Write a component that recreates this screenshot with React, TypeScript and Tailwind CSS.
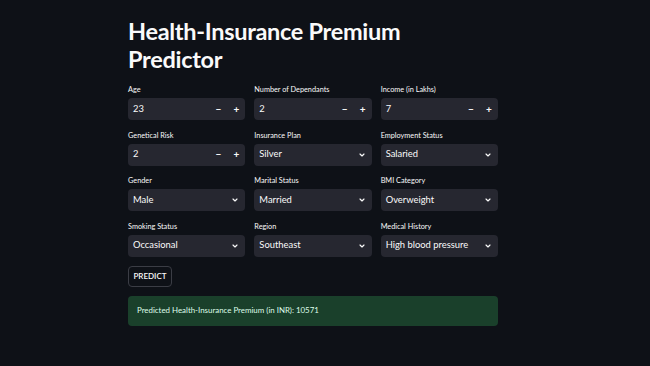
import React from "react";

type Field =
  | { kind: "number"; label: string; value: string }
  | { kind: "select"; label: string; value: string };

const fields: Field[] = [
  { kind: "number", label: "Age", value: "23" },
  { kind: "number", label: "Number of Dependants", value: "2" },
  { kind: "number", label: "Income (in Lakhs)", value: "7" },
  { kind: "number", label: "Genetical Risk", value: "2" },
  { kind: "select", label: "Insurance Plan", value: "Silver" },
  { kind: "select", label: "Employment Status", value: "Salaried" },
  { kind: "select", label: "Gender", value: "Male" },
  { kind: "select", label: "Marital Status", value: "Married" },
  { kind: "select", label: "BMI Category", value: "Overweight" },
  { kind: "select", label: "Smoking Status", value: "Occasional" },
  { kind: "select", label: "Region", value: "Southeast" },
  { kind: "select", label: "Medical History", value: "High blood pressure" },
];

function Chevron() {
  return (
    <svg width="8" height="8" viewBox="0 0 24 24" fill="none" stroke="#fafafa" strokeWidth="3.5" strokeLinecap="round" strokeLinejoin="round">
      <path d="M6 9l6 6 6-6" />
    </svg>
  );
}

function FieldCell({ f }: { f: Field }) {
  return (
    <div className="flex flex-col">
      <div className="h-[11px] mb-[3px] text-[7.3px] leading-[11px] text-[#fafafa]">{f.label}</div>
      <div className="h-[22px] rounded-[4px] bg-[#262730] flex items-center text-[9.4px] text-[#fafafa]">
        <span className="flex-1 pl-[5px]">{f.value}</span>
        {f.kind === "number" ? (
          <div className="flex items-center h-full">
            <span className="w-[18px] text-center text-[10px] font-bold">−</span>
            <span className="w-[18px] text-center text-[10px] font-bold">+</span>
          </div>
        ) : (
          <span className="pr-[6px] flex items-center">
            <Chevron />
          </span>
        )}
      </div>
    </div>
  );
}

export default function App() {
  return (
    <div className="min-h-[366px] w-full bg-[#0e1117] text-[#fafafa] font-['Lato','Noto_Sans',sans-serif]">
      <div className="ml-[128px] w-[370px] pt-[17px]">
        <h1 className="text-[23.5px] leading-[28px] font-bold tracking-[-0.3px]">
          Health-Insurance Premium
          <br />
          Predictor
        </h1>

        <div className="mt-[11px] grid grid-cols-3 gap-x-[9px] gap-y-[9.5px]">
          {fields.map((f) => (
            <FieldCell key={f.label} f={f} />
          ))}
        </div>

        <button className="mt-[9px] h-[21px] w-[44px] rounded-[4px] border border-[#3b3d45] bg-[#0e1117] text-[8px] font-semibold text-[#fafafa]">
          PREDICT
        </button>

        <div className="mt-[9px] h-[30px] rounded-[4px] bg-[#1a402b] flex items-center pl-[9px] text-[7.9px] text-[#dffde9]">
          Predicted Health-Insurance Premium (in INR): 10571
        </div>
      </div>
    </div>
  );
}
